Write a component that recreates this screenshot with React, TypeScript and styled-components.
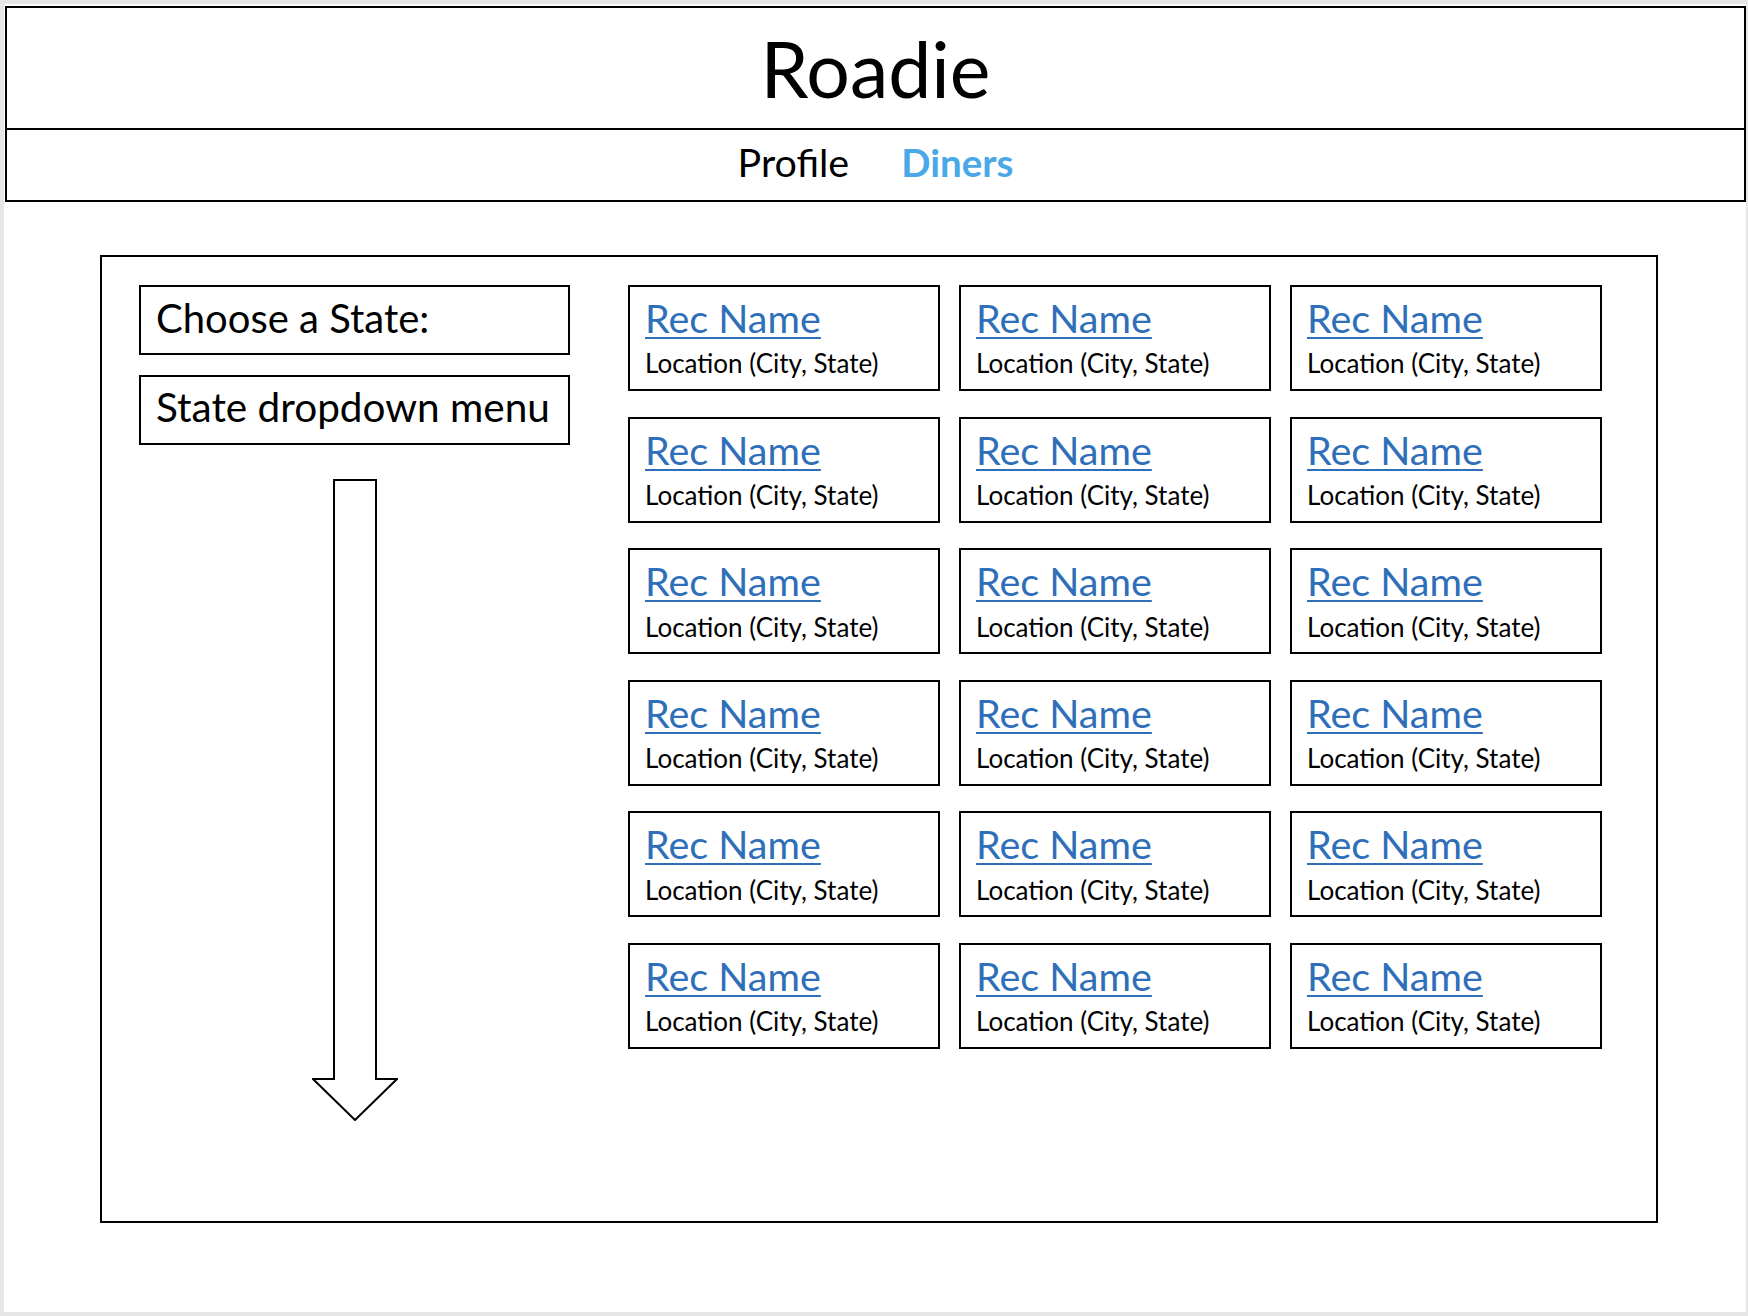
import React from "react";
import styled, { createGlobalStyle } from "styled-components";

const GlobalStyle = createGlobalStyle`
  html, body {
    margin: 0;
    padding: 0;
    background: #e6e6e6;
  }
  body {
    font-family: Lato, "Open Sans", "Liberation Sans", sans-serif;
    color: #000;
  }
`;

const Slide = styled.div`
  width: 1742px;
  height: 1308px;
  margin: 4px 2px 4px 4px;
  padding: 2px 0 0 1px;
  box-sizing: border-box;
  background: #fff;
  display: flex;
  flex-direction: column;
`;

const Header = styled.header`
  border: 2px solid #000;
  display: flex;
  flex-direction: column;
`;

const TitleRow = styled.div`
  height: 120px;
  border-bottom: 2px solid #000;
  display: flex;
  align-items: center;
  justify-content: center;
`;

const Title = styled.h1`
  margin: 0;
  font-size: 77px;
  font-weight: 400;
  line-height: 1.2;
`;

const NavRow = styled.nav`
  height: 70px;
  box-sizing: border-box;
  padding-bottom: 6px;
  display: flex;
  align-items: center;
  justify-content: center;
  gap: 52px;
`;

const NavItem = styled.span<{ $active?: boolean }>`
  font-size: ${(p) => (p.$active ? 38.5 : 39.5)}px;
  line-height: 1.2;
  font-weight: ${(p) => (p.$active ? 700 : 400)};
  color: ${(p) => (p.$active ? "#4aa8e8" : "#000")};
`;

const Main = styled.main`
  margin: 53px 0 0 95px;
  width: 1558px;
  height: 968px;
  box-sizing: border-box;
  border: 2px solid #000;
  padding: 28px 0 0 37px;
  display: flex;
  gap: 58px;
`;

const LeftColumn = styled.div`
  width: 431px;
  display: flex;
  flex-direction: column;
  align-items: center;
`;

const LabelBox = styled.div<{ $gap?: number; $lift?: number }>`
  width: 100%;
  height: 70px;
  box-sizing: border-box;
  border: 2px solid #000;
  padding: 0 0 ${(p) => p.$lift ?? 0}px 15px;
  display: flex;
  align-items: center;
  margin-top: ${(p) => p.$gap ?? 0}px;
`;

const LabelText = styled.span<{ $size: number }>`
  font-size: ${(p) => p.$size}px;
  line-height: 1.2;
`;

const ArrowWrap = styled.div`
  margin-top: 34px;
  width: 86px;
  height: 642px;
`;

const CardGrid = styled.div`
  display: grid;
  grid-template-columns: repeat(3, 312px);
  grid-auto-rows: 106px;
  column-gap: 19px;
  row-gap: 25.6px;
  align-content: start;
`;

const Card = styled.div`
  box-sizing: border-box;
  border: 2px solid #000;
  padding: 7px 15px 0;
  display: flex;
  flex-direction: column;
  align-items: flex-start;
  gap: 7px;
`;

const RecName = styled.a`
  font-size: 39.5px;
  line-height: 1.2;
  color: #2f6fba;
  text-decoration: underline;
  text-decoration-thickness: 2px;
  text-underline-offset: 4px;
`;

const Location = styled.span`
  font-size: 26px;
  line-height: 1.2;
`;

const DownArrow = () => (
  <svg width="86" height="642" viewBox="0 0 86 642">
    <polygon
      points="22,1 64,1 64,600 85,600 43,641 1,600 22,600"
      fill="#fff"
      stroke="#000"
      strokeWidth="2"
    />
  </svg>
);

export default function App() {
  const cards = Array.from({ length: 18 });
  return (
    <>
      <GlobalStyle />
      <Slide>
        <Header>
          <TitleRow>
            <Title>Roadie</Title>
          </TitleRow>
          <NavRow>
            <NavItem>Profile</NavItem>
            <NavItem $active>Diners</NavItem>
          </NavRow>
        </Header>
        <Main>
          <LeftColumn>
            <LabelBox $lift={4}>
              <LabelText $size={40}>Choose a State:</LabelText>
            </LabelBox>
            <LabelBox $gap={20} $lift={5}>
              <LabelText $size={40.5}>State dropdown menu</LabelText>
            </LabelBox>
            <ArrowWrap>
              <DownArrow />
            </ArrowWrap>
          </LeftColumn>
          <CardGrid>
            {cards.map((_, i) => (
              <Card key={i}>
                <RecName href="#">Rec Name</RecName>
                <Location>Location (City, State)</Location>
              </Card>
            ))}
          </CardGrid>
        </Main>
      </Slide>
    </>
  );
}
